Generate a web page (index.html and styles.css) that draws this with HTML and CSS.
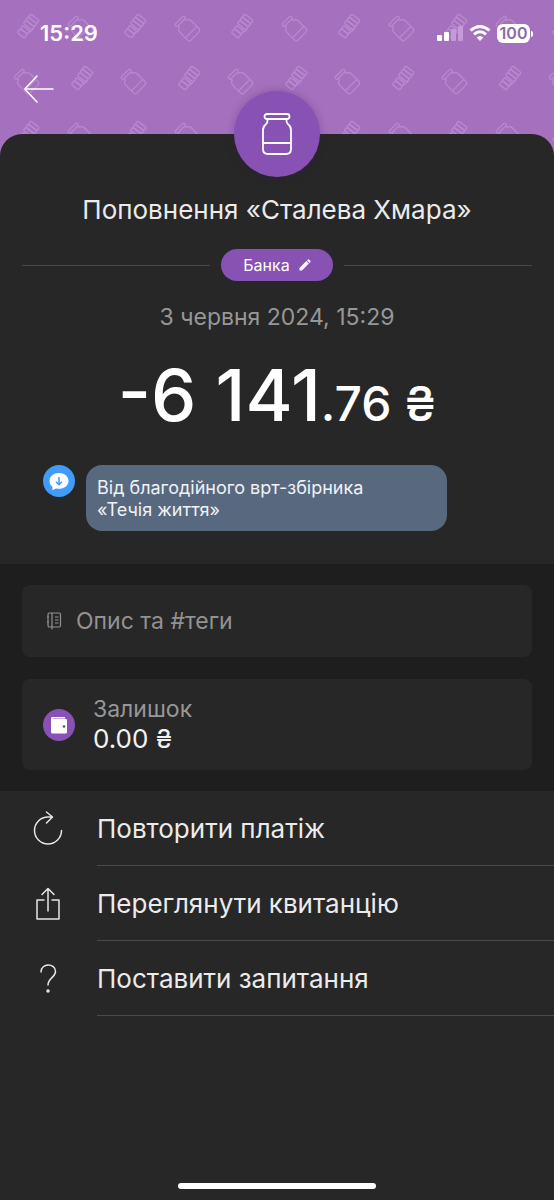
FILE: index.html
```html
<!DOCTYPE html>
<html lang="uk">
<head>
<meta charset="utf-8">
<meta name="viewport" content="width=device-width, initial-scale=1">
<title>Поповнення «Сталева Хмара»</title>
<link rel="stylesheet" href="styles.css">
</head>
<body>
<div class="screen">
  <svg class="pattern" aria-hidden="true">
    <defs>
      <g id="jar" fill="none" stroke="#b98acf" stroke-width="1.3" stroke-linejoin="round">
        <g transform="rotate(-45) scale(0.9)">
          <rect x="-7" y="-14" width="14" height="3.5" rx="1.5"/>
          <path d="M-5-10.500V-9Q-9-7-9-4V8Q-9 11-6 11H6Q9 11 9 8V-4Q9-7 5-9V-10.500M-9 5H9"/>
        </g>
      </g>
      <g id="coins" fill="none" stroke="#b98acf" stroke-width="1.3">
        <g transform="rotate(38)">
          <rect x="-6" y="-12" width="11" height="4" rx="1.500"/>
          <rect x="-6" y="-8" width="11" height="4" rx="1.500"/>
          <rect x="-6" y="-4" width="11" height="4" rx="1.500"/>
          <path d="M5-2V1Q5 3 3 3"/>
          <rect x="-5" y="2" width="9" height="4" rx="1.500"/>
          <rect x="-5" y="6" width="9" height="5" rx="1.500"/>
        </g>
      </g>
      <pattern id="tile" width="107" height="107" patternUnits="userSpaceOnUse">
        <use href="#coins" x="28" y="27"/>
        <use href="#jar" x="81" y="29"/>
        <use href="#jar" x="27" y="82"/>
        <use href="#coins" x="82" y="79"/>
      </pattern>
    </defs>
    <rect width="100%" height="100%" fill="url(#tile)"/>
  </svg>

  <header class="top">
    <div class="status">
      <time class="clock">15:29</time>
      <div class="indicators">
        <svg width="26" height="16" viewBox="0 0 26 16" aria-hidden="true">
          <rect x="0" y="10" width="5" height="6" rx="1" fill="#fff"/>
          <rect x="7" y="7" width="5" height="9" rx="1" fill="#fff"/>
          <rect x="14" y="4" width="5" height="12" rx="1" fill="#c49bd6"/>
          <rect x="21" y="1" width="5" height="15" rx="1" fill="#c49bd6"/>
        </svg>
        <svg width="22" height="16" viewBox="0 0 22 16" fill="none" stroke="#fff" stroke-width="2.9" aria-hidden="true">
          <path d="M1.500 5.500Q11-2.500 20.500 5.500"/>
          <path d="M5 9.300Q11 4.300 17 9.300"/>
          <path d="M11 16L7.600 12.500Q11 9.500 14.400 12.500Z" fill="#fff" stroke="none"/>
        </svg>
        <span class="battery">100</span>
      </div>
    </div>
    <button class="back" type="button" aria-label="Назад">
      <svg width="32" height="28" viewBox="0 0 32 28" fill="none" stroke="#fff" stroke-width="1.500" stroke-linecap="round" stroke-linejoin="round" aria-hidden="true"><path d="M29 14H1M13 1L0.800 14L13 27"/></svg>
    </button>
  </header>

  <main class="sheet">
    <div class="badge">
      <svg width="30" height="42" viewBox="0 0 30 42" fill="none" stroke="#fff" stroke-width="1.800" stroke-linejoin="round" aria-hidden="true">
        <rect x="2.500" y="1" width="25" height="5" rx="2.500"/>
        <path d="M5.500 6V8Q5.500 10 3.700 11.500Q1 13.500 1 17V36Q1 41 6 41H24Q29 41 29 36V17Q29 13.500 26.300 11.500Q24.500 10 24.500 8V6M1 30H29"/>
      </svg>
    </div>

    <section class="summary">
      <h1 class="title">Поповнення «Сталева Хмара»</h1>
      <div class="category">
        <button class="pill" type="button">Банка
          <svg width="12" height="12" viewBox="0 0 13 13" fill="#fff" aria-hidden="true"><path d="M0.500 12.500V9.800L8 2.300L10.700 5L3.200 12.500ZM8.800 1.500L9.700.6Q10.300 0 10.900.6L12.400 2.100Q13 2.700 12.400 3.300L11.500 4.200Z"/></svg>
        </button>
      </div>
      <time class="date">3 червня 2024, 15:29</time>
      <p class="amount">-6 141<span class="cents">.76 ₴</span></p>
      <div class="note">
        <svg class="round" viewBox="0 0 32 32" aria-hidden="true">
          <circle cx="16" cy="16" r="16" fill="#419bf9"/>
          <path d="M16 8C10.500 8 6.500 11.300 6.500 16C6.500 18.600 7.700 20.600 9.500 22L9.300 25.200L13.200 23.600C19.800 24.700 25.500 21.500 25.500 16C25.500 11.300 21.500 8 16 8Z" fill="#fff"/>
          <path d="M16 12V19.500M13 16.700L16 19.700L19 16.700" fill="none" stroke="#419bf9" stroke-width="1.500"/>
        </svg>
        <p class="bubble">Від благодійного врт-збірника<br>«Течія життя»</p>
      </div>
    </section>

    <section class="details">
      <label class="card field">
        <svg width="16" height="18" viewBox="0 0 16 18" fill="none" stroke="#929292" stroke-width="1.200" aria-hidden="true">
          <rect x="2" y="1" width="12.500" height="14" rx="1.500"/>
          <path d="M6 1V17.500M9 5H12.500M9 8H12.500M9 11H12.500M1 5H3M1 10H3"/>
        </svg>
        <input class="input" type="text" placeholder="Опис та #теги" aria-label="Опис та #теги">
      </label>
      <div class="card balance">
        <svg class="round" viewBox="0 0 32 32" aria-hidden="true">
          <circle cx="16" cy="16" r="16" fill="#8852b4"/>
          <path d="M9.500 8H22V9.200H10Q9.500 9.200 9.500 9.800H22.500Q24 9.800 24 11.300V23Q24 24.500 22.500 24.500H9.500Q8 24.500 8 23V9.500Q8 8 9.500 8Z" fill="#fff"/>
          <circle cx="21" cy="17.500" r="1.300" fill="#674080"/>
        </svg>
        <div>
          <div class="label">Залишок</div>
          <div class="value">0.00 ₴</div>
        </div>
      </div>
    </section>

    <nav class="actions">
      <button class="action" type="button">
        <svg width="32" height="36" viewBox="0 0 32 36" class="line" aria-hidden="true"><path d="M29.500 19.500A13.500 13.500 0 1 1 16 6H20M14.500 1L20.500 6L14.500 12"/></svg>
        <span class="text">Повторити платіж</span>
      </button>
      <button class="action" type="button">
        <svg width="32" height="36" viewBox="0 0 32 36" class="line" aria-hidden="true"><path d="M12 14H5V33H27V14H20M16 25V3M10 8.500L16 2.500L22 8.500"/></svg>
        <span class="text">Переглянути квитанцію</span>
      </button>
      <button class="action" type="button">
        <svg width="32" height="36" viewBox="0 0 32 36" class="line" aria-hidden="true"><path d="M9 11C9 1.500 23.500 2 23.500 10.500C23.500 16.500 16 17 16 24"/><circle cx="16" cy="30" r="1" fill="#e6e6e6"/></svg>
        <span class="text">Поставити запитання</span>
      </button>
    </nav>
    <div class="home"></div>
  </main>
</div>
</body>
</html>
```
FILE: styles.css
```css
* { box-sizing: border-box; }

body {
  margin: 0;
  background: #272727;
  color: #ebebeb;
  font-family: Inter, "Noto Sans", sans-serif;
}

h1, p { margin: 0; font-weight: 400; }

button {
  border: 0;
  margin: 0;
  padding: 0;
  background: none;
  color: inherit;
  font: inherit;
  cursor: pointer;
}

svg { display: block; flex: none; }

.screen {
  position: relative;
  display: flex;
  flex-direction: column;
  min-height: 100vh;
  background: linear-gradient(#a571be 160px, #272727 160px);
}

.pattern {
  position: absolute;
  top: 0;
  left: 0;
  width: 100%;
  height: 160px;
}

.top {
  position: relative;
  padding: 20px 24px 31px;
}

.status {
  display: flex;
  justify-content: space-between;
  align-items: center;
  height: 26px;
  padding-left: 16px;
}

.clock {
  color: #fff;
  font-size: 22px;
  font-weight: 600;
}

.indicators { display: flex; align-items: center; gap: 6px; }

.battery {
  position: relative;
  width: 33px;
  border-radius: 6px;
  background: #fff;
  color: #8a6aa8;
  font-size: 16px;
  font-weight: 600;
  line-height: 19px;
  text-align: center;
}

.battery::after {
  content: "";
  position: absolute;
  top: 7px;
  right: -3px;
  width: 2px;
  height: 6px;
  border-radius: 0 2px 2px 0;
  background: #fff;
}

.back { display: block; margin-top: 29px; }

.sheet {
  position: relative;
  flex: 1;
  display: flex;
  flex-direction: column;
  border-radius: 22px 22px 0 0;
  background: #272727;
}

.badge {
  position: absolute;
  top: -43px;
  left: 50%;
  display: grid;
  place-items: center;
  width: 86px;
  height: 86px;
  margin-left: -43px;
  border-radius: 50%;
  background: #8852b4;
  box-shadow: 0 0 8px rgba(60, 20, 90, 0.3);
}

.summary {
  display: flex;
  flex-direction: column;
  align-items: center;
  padding: 60px 22px 33px;
}

.title { font-size: 26px; line-height: 32px; }

.category {
  display: flex;
  align-items: center;
  align-self: stretch;
  gap: 11px;
  margin-top: 23px;
}

.category::before,
.category::after {
  content: "";
  flex: 1;
  height: 1px;
  background: #4a4a4a;
}

.pill {
  display: flex;
  align-items: center;
  gap: 9px;
  height: 32px;
  padding: 0 22px;
  border-radius: 16px;
  background: #8852b4;
  color: #fff;
  font-size: 16px;
}

.date {
  margin-top: 20px;
  color: #979797;
  font-size: 23px;
  line-height: 32px;
}

.amount {
  margin-top: 22px;
  color: #fff;
  font-size: 72px;
  font-weight: 500;
  line-height: 80px;
  white-space: nowrap;
}

.cents { font-size: 48px; }

.note {
  display: flex;
  align-self: stretch;
  gap: 11px;
  margin-top: 21px;
  padding: 0 21px;
}

.round { width: 32px; height: 32px; }

.bubble {
  flex: 0 1 361px;
  padding: 12px 11px 10px;
  border-radius: 16px;
  background: #58697f;
  color: #f0f2f5;
  font-size: 18px;
  line-height: 22px;
}

.details {
  display: flex;
  flex-direction: column;
  gap: 22px;
  padding: 21px 22px;
  background: #1e1e1e;
}

.card {
  display: flex;
  align-items: center;
  border-radius: 8px;
  background: #272727;
}

.field { gap: 14px; height: 72px; padding: 0 24px; }

.input {
  flex: 1;
  min-width: 0;
  padding: 0;
  border: 0;
  outline: 0;
  background: none;
  color: #ebebeb;
  font: inherit;
  font-size: 23px;
}

.input::placeholder { color: #929292; opacity: 1; }

.balance { gap: 18px; padding: 16px 21px 15px; }

.label { color: #979797; font-size: 23px; line-height: 28px; }

.value { color: #f2f2f2; font-size: 26px; line-height: 32px; }

.actions { display: flex; flex-direction: column; }

.action {
  display: flex;
  align-items: center;
  gap: 33px;
  padding-left: 32px;
  text-align: left;
}

.line {
  fill: none;
  stroke: #e6e6e6;
  stroke-width: 1.5;
  stroke-linecap: round;
  stroke-linejoin: round;
}

.text {
  flex: 1;
  padding-top: 2px;
  border-bottom: 1px solid #4a4a4a;
  font-size: 26px;
  line-height: 72px;
}

.home {
  width: 198px;
  height: 6px;
  margin: auto auto 11px;
  border-radius: 3px;
  background: #fff;
}
```
